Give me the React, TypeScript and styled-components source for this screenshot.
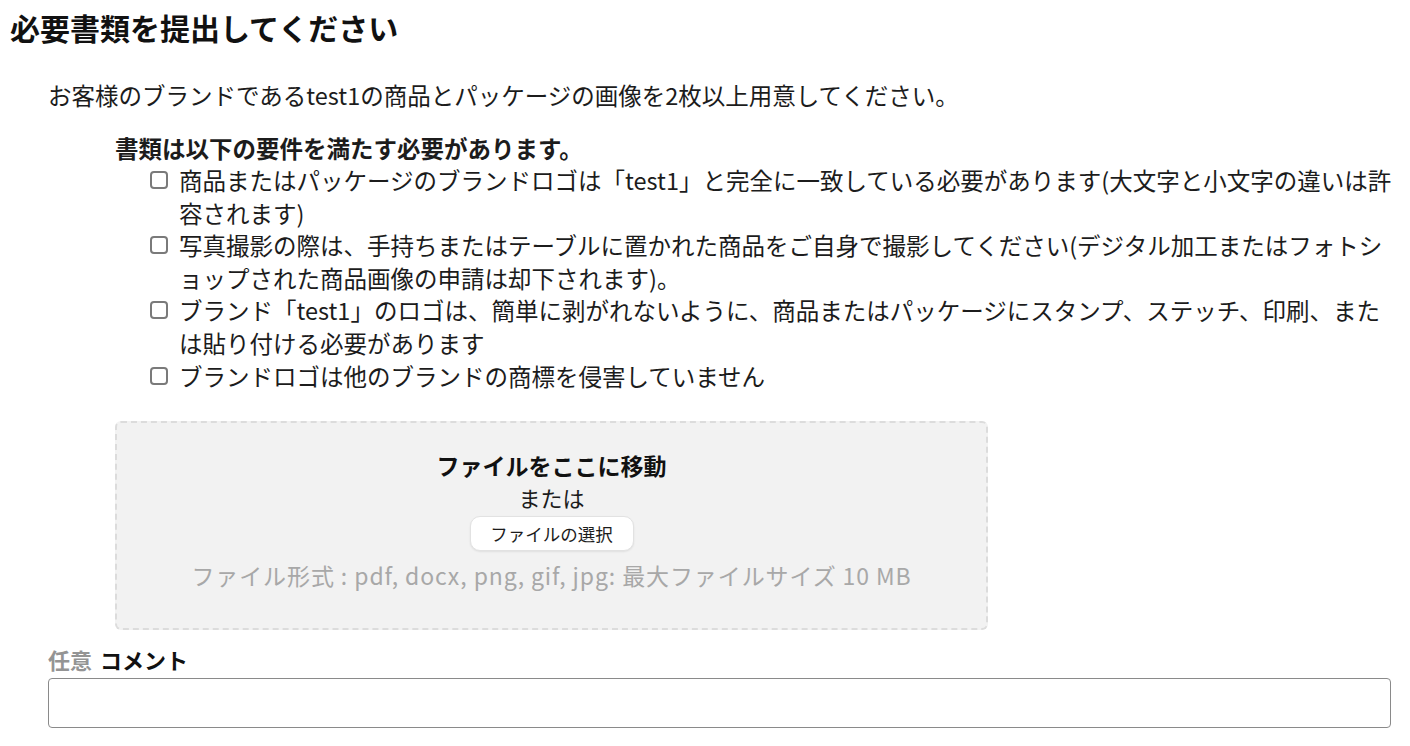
import React from "react";
import styled, { createGlobalStyle } from "styled-components";

const Global = createGlobalStyle`
  html, body { margin: 0; padding: 0; background: #fff; }
  body {
    font-family: "Noto Sans CJK JP", "Noto Sans", sans-serif;
    color: #1c1c1c;
  }
`;

const Page = styled.div`
  padding: 8px 12px 0 10px;
  display: flex;
  flex-direction: column;
`;

const Title = styled.h2`
  margin: 0;
  font-size: 30px;
  line-height: 39px;
  font-weight: 700;
  color: #111;
`;

const Body = styled.div`
  padding-left: 38px;
  display: flex;
  flex-direction: column;
`;

const Lead = styled.p`
  margin: 32px 0 0;
  font-size: 23.5px;
  line-height: 32px;
`;

const Requirements = styled.div`
  margin: 21px 0 0 67px;
  display: flex;
  flex-direction: column;
`;

const ReqHeading = styled.div`
  font-size: 23.5px;
  line-height: 32px;
  font-weight: 700;
`;

const ReqList = styled.ul`
  list-style: none;
  margin: 0;
  padding: 0 0 0 35px;
`;

const ReqItem = styled.li`
  display: grid;
  grid-template-columns: 18px 1fr;
  column-gap: 11px;
  align-items: start;
  font-size: 23.5px;
  line-height: 32.6px;
`;

const Check = styled.span`
  display: block;
  width: 18px;
  height: 18px;
  min-width: 18px;
  min-height: 18px;
  margin-top: 7px;
  border: 2px solid #7a7a7a;
  border-radius: 4px;
  background: #fff;
  box-sizing: border-box;
`;

const Drop = styled.div`
  margin: 29px 0 0 67px;
  width: 873px;
  height: 209px;
  box-sizing: border-box;
  background: #f2f2f2;
  border: 2px dashed #dcdcdc;
  border-radius: 6px;
  display: flex;
  flex-direction: column;
  align-items: center;
  padding-top: 26px;
`;

const DropTitle = styled.div`
  font-size: 23px;
  line-height: 32px;
  font-weight: 700;
  color: #111;
`;

const DropOr = styled.div`
  font-size: 22px;
  line-height: 32px;
`;

const PickButton = styled.button`
  margin-top: 3px;
  width: 164px;
  height: 35px;
  background: #fff;
  border: 1px solid #e2e2e2;
  border-radius: 10px;
  box-shadow: 0 1px 2px rgba(0, 0, 0, 0.08);
  font-family: inherit;
  font-size: 17.5px;
  color: #1c1c1c;
  padding: 0;
`;

const Formats = styled.div`
  margin-top: 8px;
  font-size: 23px;
  letter-spacing: 0.9px;
  line-height: 32px;
  color: #a8a8a8;
`;

const CommentLabel = styled.label`
  margin-top: 13px;
  font-size: 22px;
  line-height: 32px;
  font-weight: 700;
  color: #111;
`;

const Optional = styled.span`
  color: #949494;
  margin-right: 8px;
`;

const CommentInput = styled.input`
  margin-top: 3px;
  height: 50px;
  box-sizing: border-box;
  width: 1343px;
  border: 1px solid #8a8a8a;
  border-radius: 4px;
  background: #fff;
`;

const items = [
  "商品またはパッケージのブランドロゴは「test1」と完全に一致している必要があります(大文字と小文字の違いは許容されます)",
  "写真撮影の際は、手持ちまたはテーブルに置かれた商品をご自身で撮影してください(デジタル加工またはフォトショップされた商品画像の申請は却下されます)。",
  "ブランド「test1」のロゴは、簡単に剥がれないように、商品またはパッケージにスタンプ、ステッチ、印刷、または貼り付ける必要があります",
  "ブランドロゴは他のブランドの商標を侵害していません",
];

export default function App() {
  return (
    <>
      <Global />
      <Page>
        <Title>必要書類を提出してください</Title>
        <Body>
          <Lead>お客様のブランドであるtest1の商品とパッケージの画像を2枚以上用意してください。</Lead>
          <Requirements>
            <ReqHeading>書類は以下の要件を満たす必要があります。</ReqHeading>
            <ReqList>
              {items.map((t) => (
                <ReqItem key={t}>
                  <Check role="checkbox" aria-checked="false" />
                  <span>{t}</span>
                </ReqItem>
              ))}
            </ReqList>
          </Requirements>
          <Drop>
            <DropTitle>ファイルをここに移動</DropTitle>
            <DropOr>または</DropOr>
            <PickButton>ファイルの選択</PickButton>
            <Formats>ファイル形式 : pdf, docx, png, gif, jpg: 最大ファイルサイズ 10 MB</Formats>
          </Drop>
          <CommentLabel>
            <Optional>任意</Optional>コメント
          </CommentLabel>
          <CommentInput />
        </Body>
      </Page>
    </>
  );
}
